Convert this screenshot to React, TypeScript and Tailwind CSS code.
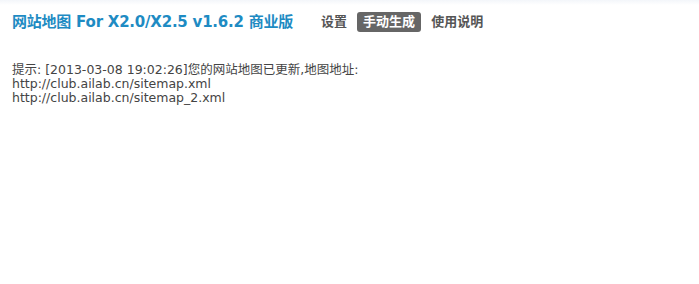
export default function App() {
  return (
    <div className="w-[699px] h-[284px] bg-white font-['DejaVu_Sans','Noto_Sans_CJK_SC',sans-serif]">
      <div className="h-[5px] bg-gradient-to-b from-[#f3f6fa] to-white" />
      <div className="flex items-center h-[32px] pl-[12px] pt-[2px]">
        <h1 className="text-[15px] font-bold text-[#1e8bc3] tracking-[-0.22px]">
          网站地图 For X2.0/X2.5 v1.6.2 商业版
        </h1>
        <div className="flex items-center ml-[28px] gap-[10px] text-[13px] font-bold text-[#555]">
          <a>设置</a>
          <a className="h-[20px] leading-[20px] px-[6px] rounded-[3px] bg-[#666] text-white">手动生成</a>
          <a>使用说明</a>
        </div>
      </div>
      <div className="pl-[12px] pt-[26px] text-[12.5px] leading-[14px] text-[#444]">
        <p>提示: [2013-03-08 19:02:26]您的网站地图已更新,地图地址:</p>
        <p>http://club.ailab.cn/sitemap.xml</p>
        <p>http://club.ailab.cn/sitemap_2.xml</p>
      </div>
    </div>
  );
}
